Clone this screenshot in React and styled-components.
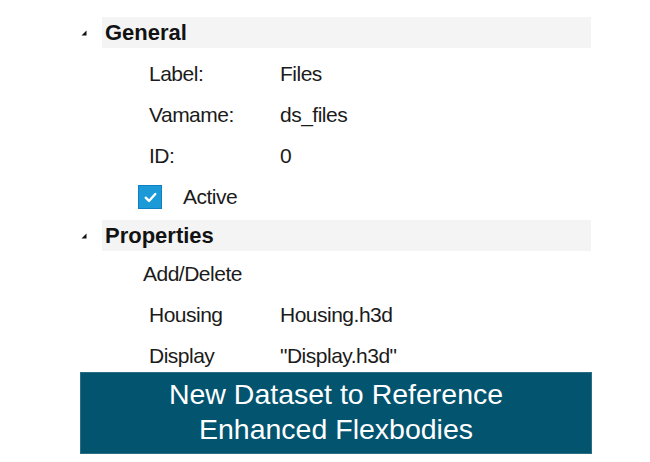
import styled, { createGlobalStyle } from 'styled-components';

const GlobalStyle = createGlobalStyle`
  body {
    margin: 0;
    background: #ffffff;
    font-family: 'Liberation Sans', Arial, sans-serif;
  }
`;

const sections = [
  {
    title: 'General',
    padTop: 11,
    padBottom: 8,
    rows: [
      { kind: 'field', label: 'Label:', value: 'Files' },
      { kind: 'field', label: 'Vamame:', value: 'ds_files' },
      { kind: 'field', label: 'ID:', value: '0' },
      { kind: 'check', label: 'Active' },
    ],
  },
  {
    title: 'Properties',
    padTop: 8,
    padBottom: 1,
    rows: [
      { kind: 'action', label: 'Add/Delete' },
      { kind: 'field', label: 'Housing', value: 'Housing.h3d' },
      { kind: 'field', label: 'Display', value: '"Display.h3d"' },
    ],
  },
];

function Arrow() {
  return (
    <svg width="6" height="6" viewBox="0 0 6 6">
      <polygon points="5.5,0.5 5.5,5.5 0.5,5.5" fill="#111" />
    </svg>
  );
}

function CheckBox() {
  return (
    <Box>
      <svg width="15" height="15" viewBox="0 0 14 14">
        <path
          d="M2.5 7.2 L5.6 10.2 L11.5 3.8"
          fill="none"
          stroke="#fff"
          strokeWidth="2.2"
          strokeLinecap="round"
          strokeLinejoin="round"
        />
      </svg>
    </Box>
  );
}

function Row({ row }) {
  if (row.kind === 'check') {
    return (
      <CheckRow>
        <CheckBox />
        <Text>{row.label}</Text>
      </CheckRow>
    );
  }
  if (row.kind === 'action') {
    return (
      <ActionRow>
        <Text>{row.label}</Text>
      </ActionRow>
    );
  }
  return (
    <FieldRow>
      <Text>{row.label}</Text>
      <Text>{row.value}</Text>
    </FieldRow>
  );
}

export default function App() {
  return (
    <>
      <GlobalStyle />
      <Panel>
        {sections.map((section) => (
          <Section key={section.title}>
            <Header>
              <ArrowCell>
                <Arrow />
              </ArrowCell>
              <HeaderBand>{section.title}</HeaderBand>
            </Header>
            <Body $top={section.padTop} $bottom={section.padBottom}>
              {section.rows.map((row) => (
                <Row key={row.label} row={row} />
              ))}
            </Body>
          </Section>
        ))}
        <Banner>
          New Dataset to Reference
          <br />
          Enhanced Flexbodies
        </Banner>
      </Panel>
    </>
  );
}

const Panel = styled.div`
  width: 512px;
  margin-left: 80px;
  padding-top: 17px;
  color: #1b1b1b;
`;

const Section = styled.section`
  display: flex;
  flex-direction: column;
`;

const Header = styled.div`
  display: flex;
  align-items: center;
  height: 31px;
`;

const ArrowCell = styled.div`
  width: 21px;
  display: flex;
  align-items: center;
  padding-left: 1px;
  margin-top: 1px;
`;

const HeaderBand = styled.div`
  width: 489px;
  height: 100%;
  display: flex;
  align-items: center;
  padding-left: 3px;
  box-sizing: border-box;
  background: #f4f4f4;
  font-size: 22px;
  font-weight: 700;
  color: #121212;
`;

const Body = styled.div`
  display: grid;
  grid-auto-rows: 30px;
  row-gap: 11px;
  padding: ${({ $top }) => $top}px 0 ${({ $bottom }) => $bottom}px;
`;

const Text = styled.span`
  font-size: 21px;
  letter-spacing: -0.5px;
  line-height: 30px;
  white-space: nowrap;
`;

const FieldRow = styled.div`
  display: grid;
  grid-template-columns: 131px 1fr;
  padding-left: 69px;
  align-items: center;
`;

const ActionRow = styled.div`
  padding-left: 63px;
  display: flex;
  align-items: center;
`;

const CheckRow = styled.div`
  display: flex;
  align-items: center;
  gap: 21px;
  padding-left: 58px;
`;

const Box = styled.span`
  width: 24px;
  height: 24px;
  box-sizing: border-box;
  display: flex;
  align-items: center;
  justify-content: center;
  background: #1c9ad8;
  border: 1px solid #0f80c4;
`;

const Banner = styled.div`
  height: 82px;
  box-sizing: border-box;
  display: flex;
  align-items: center;
  justify-content: center;
  padding-bottom: 2px;
  background: #03546f;
  border: 1px solid #2b6d85;
  color: #ffffff;
  font-size: 28.5px;
  line-height: 35px;
  text-align: center;
`;
